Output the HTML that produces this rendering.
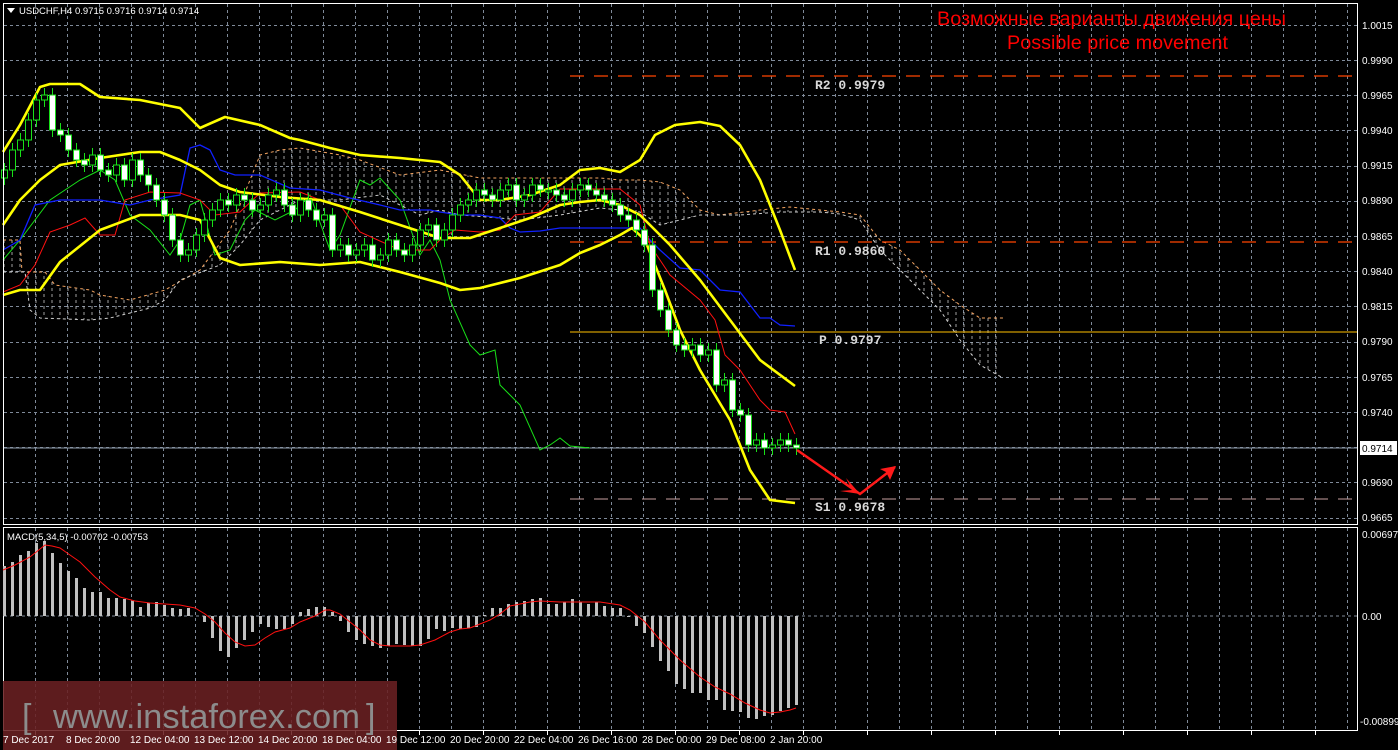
<!DOCTYPE html>
<html><head><meta charset="utf-8"><style>
html,body{margin:0;padding:0;background:#000;width:1398px;height:750px;overflow:hidden}
svg{display:block}
.ax{font-family:"Liberation Sans",sans-serif;font-size:10px;fill:#fff}
.lv{font-family:"Liberation Mono",monospace;font-size:13px;font-weight:bold;fill:#d8d8d8}
</style></head><body>
<svg id="s" width="1398" height="750" xmlns="http://www.w3.org/2000/svg">
<defs>
<pattern id="hat" width="8" height="6" patternUnits="userSpaceOnUse">
<line x1="4" y1="0" x2="4" y2="3" stroke="#c8c8c8" stroke-width="1"/>
</pattern>
<clipPath id="mc"><rect x="4" y="4" width="1353" height="520"/></clipPath>
</defs>
<rect width="1398" height="750" fill="#000"/>
<g id="grid" stroke="#7f8a99" stroke-width="1" stroke-dasharray="3,3"></g>
<g clip-path="url(#mc)">
<path d="M3,240 L20,240 L22,272 L45,272 L55,285 L90,290 L100,295 L130,300 L165,290 L200,270 L230,230 L260,155 L280,150 L300,148 L340,155 L360,160 L400,175 L440,170 L480,178 L520,178 L560,178 L600,178 L620,180 L640,180 L660,182 L680,190 L700,210 L720,215 L760,210 L790,207 L820,210 L840,212 L860,215 L880,240 L900,250 L920,270 L940,290 L960,305 L980,318 L1003,318 L1003,378 L980,365 L960,340 L940,310 L920,290 L900,270 L880,250 L860,220 L840,214 L820,212 L780,212 L740,215 L700,215 L680,220 L660,225 L640,212 L620,210 L600,208 L560,215 L520,220 L500,218 L460,215 L440,210 L420,215 L380,195 L340,200 L300,200 L260,220 L240,245 L220,265 L180,280 L165,300 L150,308 L110,318 L90,320 L40,318 L30,310 L25,272 L3,272 Z" fill="url(#hat)" opacity="0.8"/>
<polyline fill="none" stroke="#f4a460" stroke-width="1" stroke-dasharray="3,3" points="3,240 20,240 22,272 45,272 55,285 90,290 100,295 130,300 165,290 200,270 230,230 260,155 280,150 300,148 340,155 360,160 400,175 440,170 480,178 520,178 560,178 600,178 620,180 640,180 660,182 680,190 700,210 720,215 760,210 790,207 820,210 840,212 860,215 880,240 900,250 920,270 940,290 960,305 980,318 1003,318"/>
<polyline fill="none" stroke="#d0d0d0" stroke-width="1" stroke-dasharray="3,3" points="3,272 25,272 30,310 40,318 90,320 110,318 150,308 165,300 180,280 220,265 240,245 260,220 300,200 340,200 380,195 420,215 440,210 460,215 500,218 520,220 560,215 600,208 620,210 640,212 660,225 680,220 700,215 740,215 780,212 820,212 840,214 860,220 880,250 900,270 920,290 940,310 960,340 980,365 1003,378"/>
</g>
<line x1="570" y1="76" x2="1357" y2="76" stroke="#ff4500" stroke-width="1.2" stroke-dasharray="14,10"/>
<line x1="570" y1="242" x2="1357" y2="242" stroke="#ff4500" stroke-width="1.2" stroke-dasharray="14,10"/>
<line x1="570" y1="332" x2="1357" y2="332" stroke="#ffc000" stroke-width="1"/>
<line x1="570" y1="499" x2="1357" y2="499" stroke="#c8a0a0" stroke-width="1" stroke-dasharray="14,10"/>
<line x1="4" y1="448" x2="1357" y2="448" stroke="#8c9aaa" stroke-width="1"/>
<text class="lv" x="815" y="89">R2 0.9979</text>
<text class="lv" x="815" y="255">R1 0.9860</text>
<text class="lv" x="819" y="344">P 0.9797</text>
<text class="lv" x="815" y="511">S1 0.9678</text>
<polyline fill="none" stroke="#18e018" stroke-width="1" points="3,260 20,240 50,200 80,180 100,170 115,180 130,215 150,230 170,255 180,240 190,205 200,200 215,255 230,250 245,220 255,210 275,220 295,210 310,195 330,250 340,235 360,180 370,185 380,178 400,200 420,255 430,240 440,260 450,300 470,345 480,355 495,350 500,385 520,405 540,450 550,445 560,438 570,446 590,448"/>
<polyline fill="none" stroke="#1020ff" stroke-width="1.3" points="3,250 20,240 35,205 60,200 100,200 130,205 150,200 180,195 190,148 200,145 210,150 220,170 235,175 260,175 290,188 320,190 350,198 380,205 400,210 430,210 440,212 460,215 480,215 500,218 510,228 520,232 540,231 560,228 600,228 640,228 650,240 660,250 680,268 700,270 710,280 720,290 740,292 750,305 760,318 770,318 780,325 795,326"/>
<polyline fill="none" stroke="#ff1010" stroke-width="1" points="3,292 20,285 35,265 50,232 70,225 85,218 100,235 115,235 125,200 150,192 180,193 200,200 215,215 240,212 260,193 300,192 320,200 340,205 360,232 400,250 430,250 440,240 455,230 480,232 500,230 515,215 540,212 560,189 620,189 640,205 650,245 670,275 700,300 715,320 725,355 740,370 760,400 770,410 785,412 795,434"/>
<g fill="none" stroke="#ffff00" stroke-width="2.6" stroke-linejoin="round">
<polyline points="3,152 20,125 40,87 50,84 80,84 100,97 140,100 180,108 200,128 225,117 260,125 290,138 300,140 330,148 360,155 400,158 440,162 460,175 480,200 500,200 530,195 560,185 580,170 600,168 620,172 640,160 655,135 675,125 700,122 720,126 740,145 760,180 780,230 795,270"/>
<polyline points="3,225 20,200 40,180 60,165 100,158 140,152 160,152 180,160 200,170 220,185 240,192 280,197 320,200 360,212 400,225 440,238 470,238 500,228 530,218 560,205 580,202 600,200 620,205 640,215 670,245 700,280 730,320 760,360 795,386"/>
<polyline points="3,295 20,290 40,290 60,262 100,230 140,215 180,215 200,220 220,258 240,265 280,262 320,265 360,262 400,272 440,283 460,290 480,288 520,278 560,265 580,253 600,245 620,235 632,228 645,240 665,290 680,330 700,370 730,420 750,470 770,500 795,503"/>
</g>
<g id="cdl"></g>
<g stroke="#ff1a1a" stroke-width="2.5" fill="none">
<polyline points="797,450 860,494 895,467"/>
</g>
<polygon points="860,494 846,478 852,490 840,491" fill="#ff1a1a"/>
<polygon points="896,466 880,469 886,472 890,480" fill="#ff1a1a"/>
<rect x="3.5" y="3.5" width="1354" height="521" fill="none" stroke="#fff" stroke-width="1"/>
<rect x="3.5" y="527.5" width="1354" height="203" fill="none" stroke="#fff" stroke-width="1"/>
<line x1="4" y1="616" x2="1357" y2="616" stroke="#7f8a99" stroke-dasharray="3,3"/>
<g id="hist"></g>
<polyline fill="none" stroke="#ff1010" stroke-width="1" points="3,570 15,565 30,557 45,545 52,546 60,548 70,555 80,562 95,577 110,590 120,597 135,601 150,603 165,604 180,605 195,608 205,614 215,622 225,633 235,642 245,646 255,645 265,638 275,632 290,628 300,622 315,616 325,610 330,610 340,614 350,622 360,630 370,640 380,645 390,646 410,646 420,645 435,640 450,632 460,629 470,628 480,624 490,620 500,614 510,606 520,604 530,602 540,601 560,602 600,602 620,605 630,610 645,622 660,640 680,660 700,677 715,687 730,694 745,703 760,710 770,713 780,712 790,710 796,708"/>
<text class="ax" x="1362" y="29">1.0015</text>
<text class="ax" x="1362" y="64">0.9990</text>
<text class="ax" x="1362" y="99">0.9965</text>
<text class="ax" x="1362" y="134">0.9940</text>
<text class="ax" x="1362" y="169">0.9915</text>
<text class="ax" x="1362" y="204">0.9890</text>
<text class="ax" x="1362" y="240">0.9865</text>
<text class="ax" x="1362" y="275">0.9840</text>
<text class="ax" x="1362" y="310">0.9815</text>
<text class="ax" x="1362" y="345">0.9790</text>
<text class="ax" x="1362" y="381">0.9765</text>
<text class="ax" x="1362" y="416">0.9740</text>
<rect x="1360" y="441" width="37" height="14" fill="#fff"/>
<text x="1362" y="452" style="font-family:'Liberation Sans',sans-serif;font-size:10px;fill:#000">0.9714</text>
<text class="ax" x="1362" y="486">0.9690</text>
<text class="ax" x="1362" y="521">0.9665</text>
<text class="ax" x="1362" y="538">0.00697</text>
<text class="ax" x="1362" y="620">0.00</text>
<text class="ax" x="1360" y="725">-0.00899</text>
<g id="tk" stroke="#fff"></g>
<rect x="3" y="681" width="394" height="69" fill="#6a2022" opacity="0.88"/>
<text x="22" y="728" style="font-family:'Liberation Sans',sans-serif;font-size:34px;fill:#8c8c8c">[</text>
<text x="53" y="728" textLength="307" lengthAdjust="spacingAndGlyphs" style="font-family:'Liberation Sans',sans-serif;font-size:34px;fill:#8c8c8c">www.instaforex.com</text>
<text x="366" y="728" style="font-family:'Liberation Sans',sans-serif;font-size:34px;fill:#8c8c8c">]</text>
<g class="ax" id="tl">
<text x="3" y="743">7 Dec 2017</text>
<text x="66" y="743">8 Dec 20:00</text>
<text x="130" y="743">12 Dec 04:00</text>
<text x="194" y="743">13 Dec 12:00</text>
<text x="258" y="743">14 Dec 20:00</text>
<text x="322" y="743">18 Dec 04:00</text>
<text x="386" y="743">19 Dec 12:00</text>
<text x="450" y="743">20 Dec 20:00</text>
<text x="514" y="743">22 Dec 04:00</text>
<text x="578" y="743">26 Dec 16:00</text>
<text x="642" y="743">28 Dec 00:00</text>
<text x="706" y="743">29 Dec 08:00</text>
<text x="770" y="743">2 Jan 20:00</text>
</g>
<polygon points="7,8 15,8 11,13" fill="#fff"/>
<text x="19" y="14" style="font-family:'Liberation Sans',sans-serif;font-size:9.5px;fill:#fff">USDCHF,H4  0.9715 0.9716 0.9714 0.9714</text>
<text x="7" y="540" style="font-family:'Liberation Sans',sans-serif;font-size:9.5px;fill:#fff">MACD(5,34,5) -0.00702 -0.00753</text>
<text x="937" y="25" textLength="349" lengthAdjust="spacingAndGlyphs" style="font-family:'Liberation Sans','Noto Sans CJK SC',sans-serif;font-size:19px;fill:#f00">Возможные варианты движения цены</text>
<text x="1007" y="49" textLength="221" lengthAdjust="spacingAndGlyphs" style="font-family:'Liberation Sans',sans-serif;font-size:19px;fill:#f00">Possible price movement</text>
</svg>
<script>
var NS="http://www.w3.org/2000/svg";
function el(p,t,a){var e=document.createElementNS(NS,t);for(var k in a)e.setAttribute(k,a[k]);p.appendChild(e);return e;}
var g=document.getElementById('grid');
for(var x=35;x<1357;x+=32){el(g,'line',{x1:x+.5,y1:4,x2:x+.5,y2:524});el(g,'line',{x1:x+.5,y1:528,x2:x+.5,y2:730});}
for(var y=24.8;y<522;y+=35.2){var yy=Math.round(y)+.5;el(g,'line',{x1:4,y1:yy,x2:1357,y2:yy});}
var tk=document.getElementById('tk');
for(var x=35;x<1357;x+=64){el(tk,'line',{x1:x+.5,y1:731,x2:x+.5,y2:735});}
var c=[170,150,140,120,100,95,130,135,150,160,165,155,170,175,165,180,160,175,185,200,215,240,255,250,235,220,210,200,205,195,200,210,205,195,190,205,215,200,210,220,215,250,245,255,250,245,260,255,240,250,255,245,230,225,240,230,215,205,200,190,195,200,190,185,200,195,185,190,190,195,200,190,185,190,195,200,205,215,220,230,245,290,310,330,345,350,345,355,350,385,380,410,415,445,440,448,445,440,445,448];
var cd=document.getElementById('cdl');
for(var i=0;i<c.length;i++){var x=4+8*i;var o=i?c[i-1]:c[0]+8;var cl=c[i];var t=Math.min(o,cl),b=Math.max(o,cl);if(b-t<2){b=t+2;}
el(cd,'line',{x1:x+.5,y1:t-7,x2:x+.5,y2:b+7,stroke:'#18e018','stroke-width':1});
el(cd,'rect',{x:x-2.5,y:t,width:6,height:b-t,fill:cl>o?'#fff':'#000',stroke:'#18e018','stroke-width':1});}
var h=[50,54,61,65,73,75,63,53,45,38,28,24,24,18,18,17,15,9,13,14,11,8,7,8,0,-6,-22,-35,-41,-32,-24,-16,-8,-11,-13,-13,-8,4,7,9,9,4,-5,-16,-24,-28,-30,-32,-30,-28,-29,-30,-30,-23,-13,-15,-12,-13,-12,-11,1,8,8,12,14,15,17,18,12,12,14,17,14,12,14,10,8,8,-1,-10,-17,-31,-45,-55,-68,-73,-77,-77,-84,-84,-94,-95,-96,-102,-103,-100,-99,-95,-92,-89];
var hg=document.getElementById('hist');
for(var i=0;i<h.length;i++){var x=3+8*i;var v=h[i];if(v==0)continue;el(hg,'rect',{x:x,y:v>0?616-v:616,width:3,height:Math.abs(v),fill:'#c0c0c0'});}
</script>
</body></html>
